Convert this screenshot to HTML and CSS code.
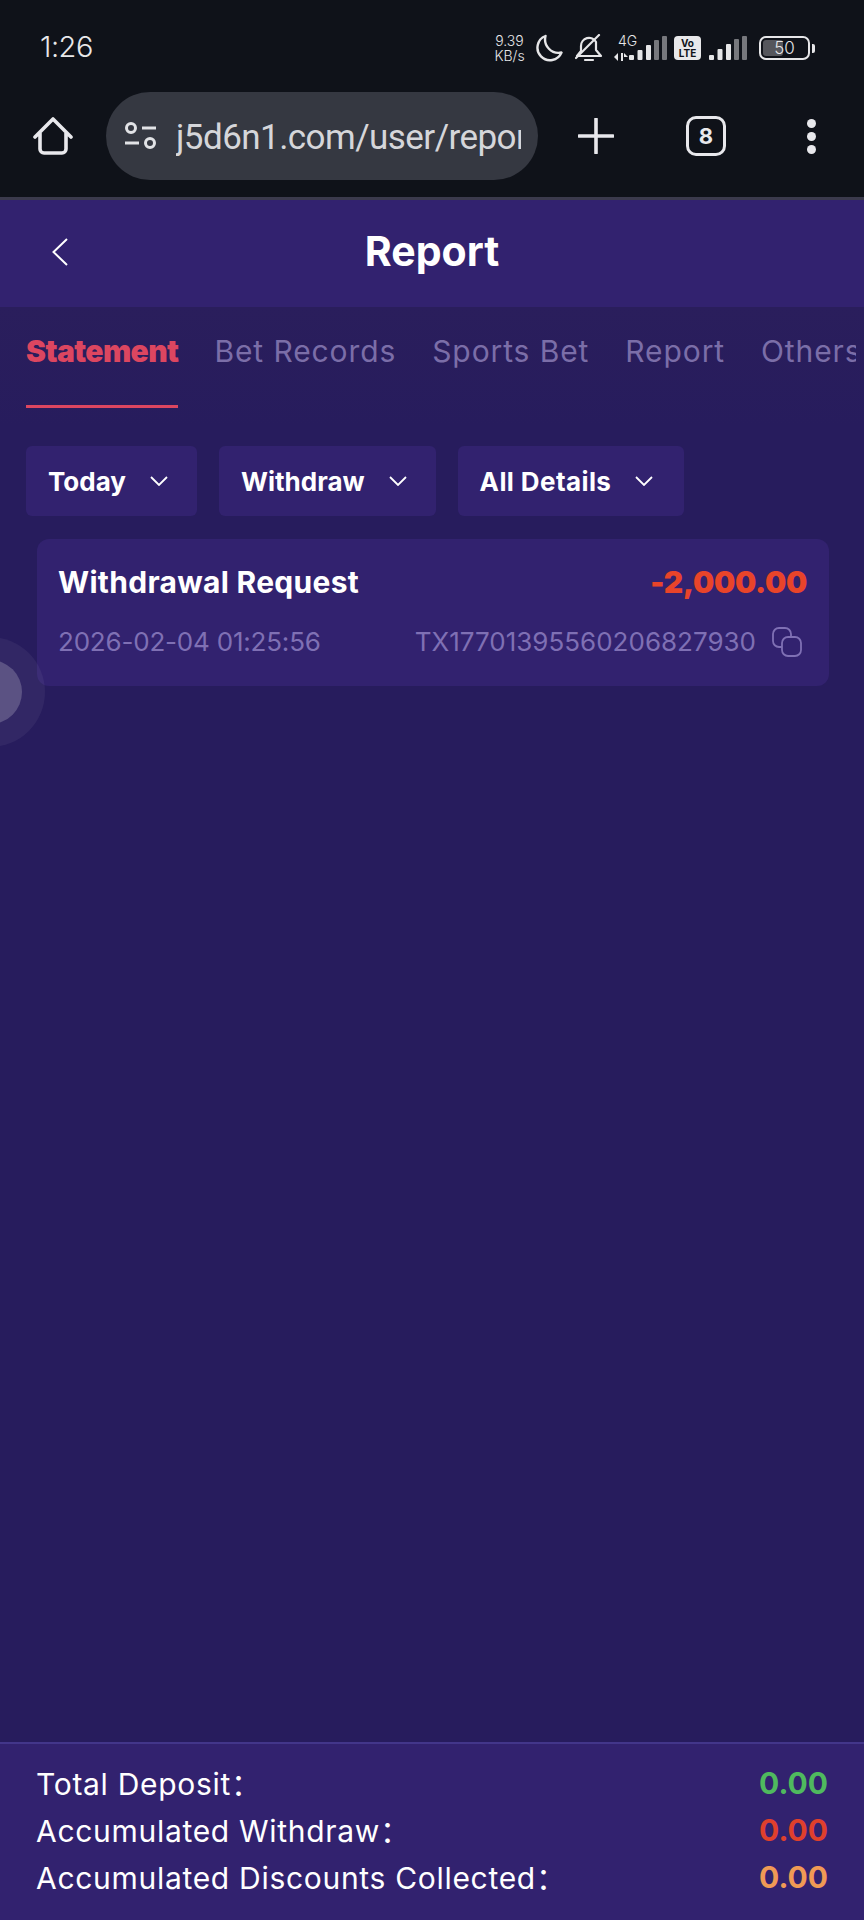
FILE: index.html
```html
<!DOCTYPE html>
<html lang="en">
<head>
<meta charset="utf-8">
<title>Report</title>
<link rel="stylesheet" href="styles.css">
</head>
<body>
<div class="phone">
  <div class="chrome">
    <div class="status">
      <span class="time">1:26</span>
      <div class="status-icons">
        <span class="speed"><span>9.39</span><span>KB/s</span></span>
        <svg class="ico-moon" viewBox="0 0 28 28"><path d="M10.500 2 A12.500 12.500 0 1 0 26.500 18.500 A13.500 13.500 0 0 1 10.500 2Z" fill="none" stroke="#e6e6e8" stroke-width="2.400" stroke-linejoin="round"/></svg>
        <svg class="ico-bell" viewBox="0 0 28 28"><path d="M2 22 L6 17 V12 A8 8 0 0 1 21 8 V16 L26 22 Z M10 26 H18" fill="none" stroke="#e6e6e8" stroke-width="2.200" stroke-linejoin="round" stroke-linecap="round"/><path d="M1 24 L24 1" stroke="#e6e6e8" stroke-width="2.200" stroke-linecap="round"/></svg>
        <span class="net">
          <span class="net-label">4G</span>
          <svg class="ico-arrows" viewBox="0 0 14 10"><path d="M0 5 L4 1 V9Z M7 1 H9 V9 H7Z M10 1 L14 5 H10Z" fill="#e6e6e8"/></svg>
        </span>
        <svg class="ico-sig1" viewBox="0 0 38 24"><g fill="#e6e6e8"><rect x="0" y="19" width="5" height="5" rx="1"/><rect x="8.500" y="14" width="5" height="10" rx="1"/><rect x="17" y="9" width="5" height="15" rx="1"/></g><g fill="#77787d"><rect x="25" y="4" width="5" height="20" rx="1"/><rect x="33" y="0" width="5" height="24" rx="1"/></g></svg>
        <span class="volte"><span>Vo</span><span>LTE</span></span>
        <svg class="ico-sig2" viewBox="0 0 38 24"><g fill="#e6e6e8"><rect x="0" y="19" width="5" height="5" rx="1"/><rect x="8.500" y="13" width="5" height="11" rx="1"/><rect x="17" y="8" width="5" height="16" rx="1"/></g><g fill="#77787d"><rect x="25" y="3" width="5" height="21" rx="1"/><rect x="33" y="0" width="5" height="24" rx="1"/></g></svg>
        <span class="battery"><span class="batt-fill"></span><span class="batt-num">50</span></span>
        <span class="batt-nub"></span>
      </div>
    </div>
    <div class="browser">
      <svg class="ico-home" viewBox="0 0 40 40"><path d="M2 21 L20 3 L38 21 M7 17 V33 A4 4 0 0 0 11 37 H29 A4 4 0 0 0 33 33 V17" fill="none" stroke="#e8e8ec" stroke-width="3.600" stroke-linecap="round" stroke-linejoin="round"/></svg>
      <div class="url">
        <svg class="ico-tune" viewBox="0 0 34 28"><g fill="none" stroke="#e2e3e6" stroke-width="3"><circle cx="7" cy="6" r="4.500"/><circle cx="26" cy="21" r="4.500"/></g><g stroke="#e2e3e6" stroke-width="3"><path d="M18 6 H32"/><path d="M1 21 H15"/></g></svg>
        <span class="url-text">j5d6n1.com/user/report</span>
      </div>
      <svg class="ico-plus" viewBox="0 0 36 36"><path d="M18 1 V35 M1 18 H35" stroke="#e8e8ec" stroke-width="3.600" stroke-linecap="round"/></svg>
      <span class="tabs-count">8</span>
      <span class="dots"><i></i><i></i><i></i></span>
    </div>
  </div>

  <header class="topbar">
    <svg class="ico-back" viewBox="0 0 16 28"><path d="M15 1 L1.500 14 L15 27" fill="none" stroke="#fff" stroke-width="2"/></svg>
    <h1>Report</h1>
  </header>

  <main class="content">
    <nav class="tabs">
      <span class="tab active">Statement</span>
      <span class="tab">Bet Records</span>
      <span class="tab">Sports Bet</span>
      <span class="tab">Report</span>
      <span class="tab">Others</span>
    </nav>

    <div class="filters">
      <div class="filter">Today<svg viewBox="0 0 18 10"><path d="M1 1 L9 9 L17 1" fill="none" stroke="#fff" stroke-width="1.800"/></svg></div>
      <div class="filter">Withdraw<svg viewBox="0 0 18 10"><path d="M1 1 L9 9 L17 1" fill="none" stroke="#fff" stroke-width="1.800"/></svg></div>
      <div class="filter filter-wide">All Details<svg viewBox="0 0 18 10"><path d="M1 1 L9 9 L17 1" fill="none" stroke="#fff" stroke-width="1.800"/></svg></div>
    </div>

    <article class="card">
      <div class="card-row">
        <span class="card-title">Withdrawal Request</span>
        <span class="card-amount">-2,000.00</span>
      </div>
      <div class="card-row card-meta">
        <span class="date">2026-02-04 01:25:56</span>
        <span class="txid">TX17701395560206827930
          <svg class="ico-copy" viewBox="0 0 30 30"><g fill="none" stroke="#7f70b4" stroke-width="1.800"><path d="M10 20 H7 A6 6 0 0 1 1 14 V7 A6 6 0 0 1 7 1 H13 A6 6 0 0 1 19 7 V10"/><rect x="10" y="10" width="19" height="19" rx="6"/></g></svg>
        </span>
      </div>
    </article>

    <div class="float-ball"><span></span></div>
  </main>

  <footer class="totals">
    <div class="total"><span>Total Deposit：</span><b class="green">0.00</b></div>
    <div class="total"><span>Accumulated Withdraw：</span><b class="red">0.00</b></div>
    <div class="total"><span>Accumulated Discounts Collected：</span><b class="orange">0.00</b></div>
  </footer>
</div>
</body>
</html>
```
FILE: styles.css
```css
* { box-sizing: border-box; }
html, body { margin: 0; padding: 0; }
body { width: 864px; height: 1920px; overflow: hidden; font-family: "Inter", "Noto Sans CJK SC", sans-serif; background: #271c5d; }
.phone { width: 864px; height: 1920px; display: flex; flex-direction: column; position: relative; overflow: hidden; }

.chrome { height: 200px; background: #0f1219; border-bottom: 3px solid #3b3a4c; flex: none; }
.status { height: 92px; display: flex; align-items: flex-start; justify-content: space-between; padding: 33px 49px 0 40px; }
.time { font: 300 29px/28px "Inter", sans-serif; color: #e8e8ea; letter-spacing: -0.5px; }
.status-icons { display: flex; align-items: center; height: 30px; }
.speed { display: flex; flex-direction: column; align-items: center; width: 33px; font: 300 14px/15px "Inter", sans-serif; color: #e6e6e8; margin-right: 9px; }
.ico-moon { width: 28px; height: 28px; margin-right: 12px; }
.ico-bell { width: 28px; height: 28px; margin-right: 11px; }
.net { display: flex; flex-direction: column; width: 20px; align-items: flex-start; }
.net-label { font: 300 14px/14px "Inter", sans-serif; color: #e6e6e8; margin-left: 4px; }
.ico-arrows { width: 14px; height: 10px; margin-top: 4px; }
.ico-sig1 { width: 38px; height: 24px; margin-left: -5px; }
.volte { width: 27px; height: 24px; margin-left: 7px; background: #e8e8ea; border-radius: 4px; color: #0f1219; display: flex; flex-direction: column; align-items: center; justify-content: center; font: 700 10px/10px "Inter", sans-serif; }
.ico-sig2 { width: 38px; height: 24px; margin-left: 8px; }
.battery { width: 51px; height: 24px; margin-left: 12px; border: 2px solid #e6e6e8; border-radius: 7px; position: relative; display: flex; align-items: center; justify-content: center; }
.batt-fill { position: absolute; left: 2px; top: 2px; bottom: 2px; width: 20px; background: #55565c; border-radius: 3px; }
.batt-num { position: relative; font: 300 17px/20px "Inter", sans-serif; color: #e6e6e8; }
.batt-nub { width: 3px; height: 9px; margin-left: 2px; background: #e6e6e8; border-radius: 0 2px 2px 0; }

.browser { height: 88px; display: flex; align-items: center; position: relative; }
.ico-home { width: 40px; height: 40px; margin-left: 33px; flex: none; }
.url { width: 432px; height: 88px; margin-left: 33px; background: #353841; border-radius: 44px; display: flex; align-items: center; padding-left: 18px; flex: none; }
.ico-tune { width: 34px; height: 28px; flex: none; }
.url-text { width: 345px; margin: 3px 0 0 18px; overflow: hidden; white-space: nowrap; font: 400 35px/44px "Roboto", sans-serif; letter-spacing: -0.55px; color: #d5d6da; }
.ico-plus { width: 36px; height: 36px; margin-left: 40px; flex: none; }
.tabs-count { width: 40px; height: 40px; margin-left: 72px; border: 3.5px solid #e8e8ec; border-radius: 10px; display: flex; align-items: center; justify-content: center; font: 700 22px/22px "Inter", sans-serif; color: #e8e8ec; flex: none; }
.dots { display: flex; flex-direction: column; gap: 4px; margin-left: 81px; flex: none; }
.dots i { width: 9px; height: 9px; border-radius: 50%; background: #e8e8ec; display: block; }

.topbar { height: 107px; background: #32226f; flex: none; position: relative; display: flex; align-items: center; justify-content: center; padding-bottom: 5px; }
.topbar h1 { margin: 0; font-size: 41px; font-weight: 700; color: #fff; }
.ico-back { position: absolute; left: 52px; top: 38px; width: 16px; height: 28px; }

.content { flex: 1; background: linear-gradient(#2a1e5c, #271c5d 120px); position: relative; }
.tabs { display: flex; gap: 36px; padding-left: 26px; height: 102px; overflow: hidden; white-space: nowrap; width: 856px; }
.tab { font-size: 30px; color: #7b6ea8; line-height: 38px; padding-top: 25px; height: 102px; flex: none; letter-spacing: 0.9px; }
.tab.active { color: #dc4660; font-weight: 900; letter-spacing: -0.6px; border-bottom: 3px solid #dc4660; height: 101px; }

.filters { display: flex; gap: 22px; padding: 37px 0 0 26px; }
.filter { height: 70px; padding: 0 29px 0 22px; gap: 24px; background: #32226f; border-radius: 6px; color: #fff; font-size: 26px; font-weight: 700; display: flex; align-items: center; }
.filter svg { width: 18px; height: 10px; }
.filter-wide { letter-spacing: 0.4px; padding-right: 31px; }

.card { margin: 23px 0 0 37px; width: 792px; height: 147px; background: #32226f; border-radius: 12px; padding: 23px 22px 0 21px; }
.card-row { display: flex; justify-content: space-between; align-items: center; }
.card-title { font-size: 30px; font-weight: 700; color: #fff; line-height: 40px; letter-spacing: 0.3px; }
.card-amount { font-size: 30px; font-weight: 900; letter-spacing: -0.3px; color: #e8442a; line-height: 40px; }
.card-meta { margin: 22px 5px 0 0; color: #7f70b4; font-size: 26px; line-height: 36px; }
.date { letter-spacing: -0.2px; }
.txid { display: flex; align-items: center; gap: 16px; }
.ico-copy { width: 30px; height: 30px; }

.float-ball { position: absolute; left: -65px; top: 330px; width: 110px; height: 110px; border-radius: 50%; background: rgba(255, 255, 255, 0.05); display: flex; align-items: center; justify-content: center; }
.float-ball span { width: 64px; height: 64px; border-radius: 50%; background: rgba(255, 255, 255, 0.2); display: block; }

.totals { height: 178px; flex: none; background: #32226f; border-top: 2px solid #43368a; padding: 14px 36px 0; }
.total { display: flex; justify-content: space-between; align-items: center; height: 47px; color: #fff; font-size: 30px; letter-spacing: 0.7px; }
.total b { font-weight: 700; font-size: 30px; letter-spacing: 0; margin-top: 2px; }
.green { color: #4fba5e; }
.red { color: #e0402c; }
.orange { color: #f09a55; }
```
